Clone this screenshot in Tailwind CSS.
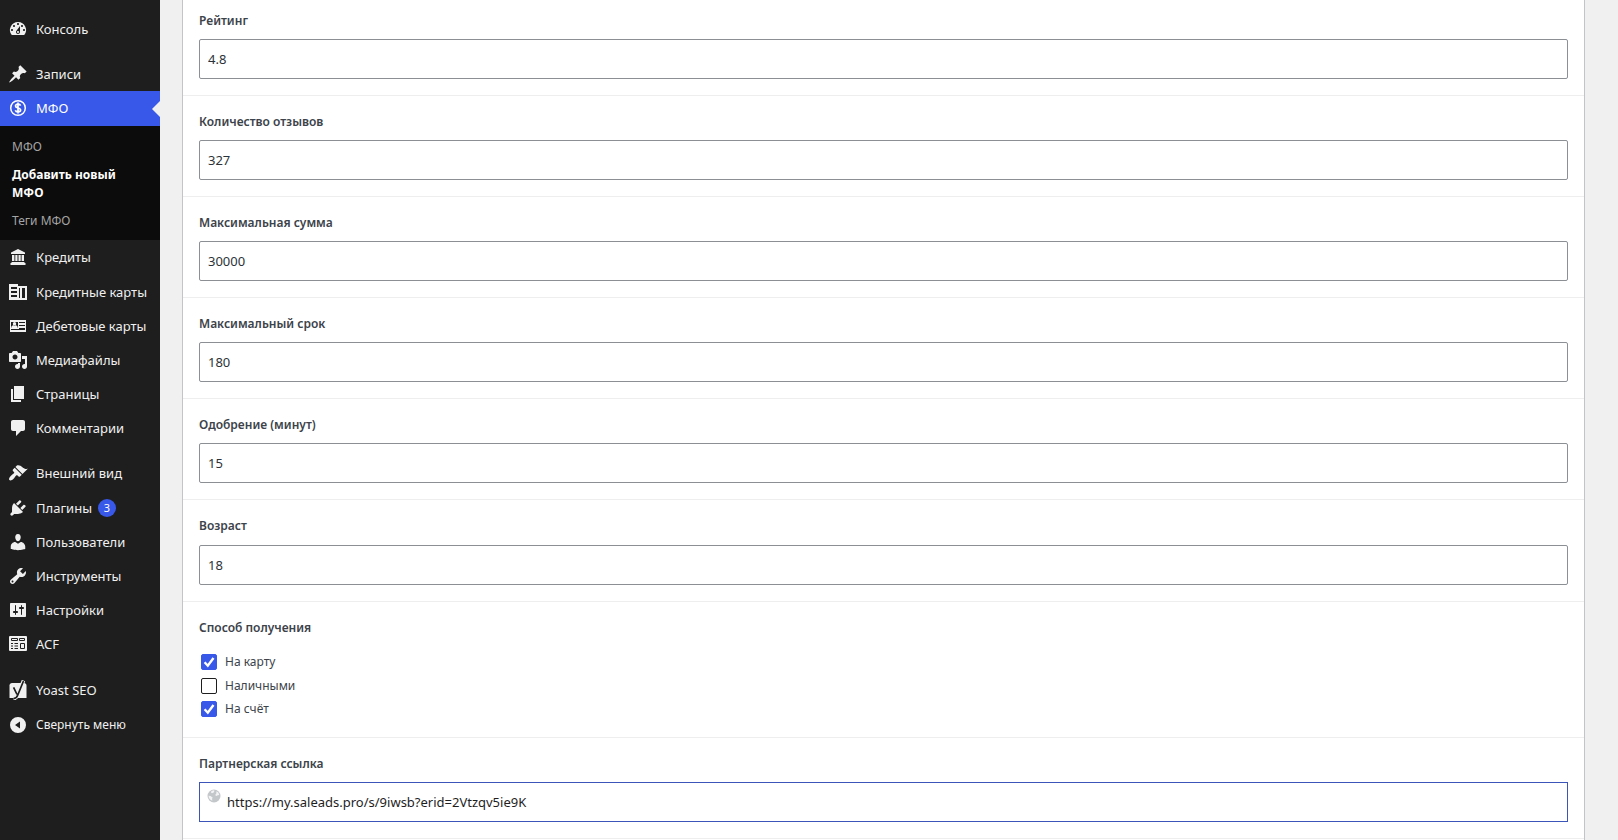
<!DOCTYPE html>
<html lang="ru">
<head>
    <meta charset="UTF-8">
    <meta name="viewport" content="width=device-width, initial-scale=1.0">
    <title>Добавить новый МФО</title>
    <script src="https://cdn.jsdelivr.net/npm/@tailwindcss/browser@4"></script>
</head>
<body class="flex h-screen overflow-hidden bg-[#f0f0f1] font-['Noto_Sans','Open_Sans',sans-serif] text-[12px] text-[#3c434a]">
    <!-- Sidebar -->
    <nav class="w-40 shrink-0 bg-[#1e1e1e] pt-3 text-[13px] leading-[18px] text-[#f0f0f0]">
        <ul>
            <li><a href="#" class="flex h-[34px] items-center gap-2 pl-2">
                <svg class="size-5 shrink-0" viewBox="0 0 20 20" fill="currentColor" fill-rule="evenodd"><path d="M3.76 16h12.48A7.998 7.998 0 0 0 10 3a7.998 7.998 0 0 0-6.24 13zM10 4c.55 0 1 .45 1 1s-.45 1-1 1-1-.45-1-1 .45-1 1-1zM6 6c.55 0 1 .45 1 1s-.45 1-1 1-1-.45-1-1 .45-1 1-1zm8 0c.55 0 1 .45 1 1s-.45 1-1 1-1-.45-1-1 .45-1 1-1zm-5.37 5.55L12 7v6c0 1.1-.9 2-2 2s-2-.9-2-2c0-.57.24-1.08.63-1.45zM4 10c.55 0 1 .45 1 1s-.45 1-1 1-1-.45-1-1 .45-1 1-1zm12 0c.55 0 1 .45 1 1s-.45 1-1 1-1-.45-1-1 .45-1 1-1zm-5 3c0-.55-.45-1-1-1s-1 .45-1 1 .45 1 1 1 1-.45 1-1z"/></svg>
                Консоль</a></li>
            <li class="mt-[11px]"><a href="#" class="flex h-[34px] items-center gap-2 pl-2">
                <svg class="size-5 shrink-0" viewBox="0 0 20 20" fill="currentColor"><path d="M10.44 3.02l1.82-1.82 6.36 6.35-1.83 1.82c-1.05-.68-2.48-.57-3.41.36l-.75.75c-.92.93-1.04 2.35-.35 3.41l-1.83 1.82-2.41-2.41-2.8 2.79c-.42.42-3.38 2.71-3.8 2.29s1.86-3.39 2.28-3.81l2.79-2.79L4.1 9.36l1.83-1.82c1.05.69 2.48.57 3.4-.36l.75-.75c.93-.92 1.05-2.35.36-3.41z"/></svg>
                Записи</a></li>
            <li>
                <a href="#" class="relative flex h-[35px] items-center gap-2 bg-[#3858e9] pb-px pl-2 text-white">
                    <svg class="size-5 shrink-0" viewBox="0 0 20 20" fill="none" stroke="currentColor"><circle cx="10" cy="10" r="7.3" stroke-width="1.5"/><path d="M12.6 7.6C12.2 6.7 11.2 6.2 10 6.2c-1.4 0-2.5.7-2.5 1.8 0 2.6 5.1 1.3 5.1 4 0 1.2-1.1 1.9-2.6 1.9-1.4 0-2.4-.6-2.7-1.6M10 4.6v10.8" stroke-width="1.7"/></svg>
                    МФО
                    <span class="absolute top-1/2 right-0 -translate-y-1/2 border-y-8 border-r-8 border-y-transparent border-r-[#f0f0f1]"></span>
                </a>
                <ul class="bg-[#0c0c0c] px-3 pt-[7px] pb-[5px] text-[12px] text-[#a5a5a5]">
                    <li><a href="#" class="block py-[5px]">МФО</a></li>
                    <li><a href="#" class="block py-[5px] font-bold text-white">Добавить новый МФО</a></li>
                    <li><a href="#" class="block py-[5px]">Теги МФО</a></li>
                </ul>
            </li>
            <li><a href="#" class="flex h-[35px] items-center gap-2 pb-px pl-2">
                <svg class="size-5 shrink-0" viewBox="0 0 20 20" fill="currentColor"><path d="M10 2l7 3.5V7H3V5.5zM4 8h2.4v6H4zM7.3 8h2.2v6H7.3zM10.5 8h2.2v6h-2.2zM13.6 8H16v6h-2.4zM3.5 15h13v1h-13zM2.5 16h15v2h-15z"/></svg>
                Кредиты</a></li>
            <li><a href="#" class="flex h-[34px] items-center gap-2 pl-2">
                <svg class="size-5 shrink-0" viewBox="0 0 20 20" fill="currentColor" fill-rule="evenodd"><path d="M1 2h9v2h9v14H1zM3 5v2h6V5zm0 4v2h6V9zm0 4v2h6v-2zM11 6v10h1V6zM14 6v10h3V6z"/></svg>
                Кредитные карты</a></li>
            <li><a href="#" class="flex h-[34px] items-center gap-2 pl-2">
                <svg class="size-5 shrink-0" viewBox="0 0 20 20" fill="currentColor" fill-rule="evenodd"><path d="M2 4h16v12H2zM3 6v6h7V6zm8 0v1h6V6zm0 3v1h6V9zm0 3v1h6v-1zM3 13v1h14v-1z"/><path d="M6.5 6a1.7 1.7 0 0 1 0 3.4 1.7 1.7 0 0 1 0-3.4zM3.2 12c0-1.6 1.1-2.7 2.3-2.7l1 .8 1-.8c1.2 0 2.3 1.1 2.3 2.7z"/></svg>
                Дебетовые карты</a></li>
            <li><a href="#" class="flex h-[34px] items-center gap-2 pl-2">
                <svg class="size-5 shrink-0" viewBox="0 0 20 20" fill="currentColor" fill-rule="evenodd"><path d="M13 11V4c0-.55-.45-1-1-1h-1.67L9 1H5L3.67 3H2c-.55 0-1 .45-1 1v7c0 .55.45 1 1 1h10c.55 0 1-.45 1-1zM7 4.5c1.38 0 2.5 1.12 2.5 2.5S8.38 9.5 7 9.5 4.5 8.38 4.5 7 5.62 4.5 7 4.5zM14 6h5v10.5c0 1.38-1.12 2.5-2.5 2.5S14 17.88 14 16.5s1.12-2.5 2.5-2.5c.17 0 .34.02.5.05V9h-3V6zm-4 8.05V13h2v3.5c0 1.38-1.12 2.5-2.5 2.5S7 17.88 7 16.5 8.12 14 9.5 14c.17 0 .34.02.5.05z"/></svg>
                Медиафайлы</a></li>
            <li><a href="#" class="flex h-[34px] items-center gap-2 pl-2">
                <svg class="size-5 shrink-0" viewBox="0 0 20 20" fill="currentColor"><path d="M6 15V2h10v13H6zm-1 1h8v2H3V5h2v11z"/></svg>
                Страницы</a></li>
            <li><a href="#" class="flex h-[34px] items-center gap-2 pl-2">
                <svg class="size-5 shrink-0" viewBox="0 0 20 20" fill="currentColor"><path d="M5 2h10c1.1 0 2 .9 2 2v7c0 1.1-.9 2-2 2h-2l-5 5v-5H5c-1.1 0-2-.9-2-2V4c0-1.1.9-2 2-2z"/></svg>
                Комментарии</a></li>
            <li class="mt-[11px]"><a href="#" class="flex h-[35px] items-center gap-2 pb-px pl-2">
                <svg class="size-5 shrink-0" viewBox="0 0 20 20" fill="currentColor"><path d="M14.48 11.06L7.41 3.99l1.5-1.5c.5-.56 2.3-.47 3.51.32 1.21.8 1.43 1.28 2.91 2.1 1.18.64 2.45 1.26 4.45.85zm-.71.71L6.7 4.7 4.93 6.47c-.39.39-.39 1.02 0 1.41l1.06 1.06c.39.39.39 1.03 0 1.42-.6.6-1.43 1.11-2.21 1.69-.35.26-.7.53-1.01.84C1.43 14.23.4 16.08 1.4 17.07c.99 1 2.84-.03 4.18-1.36.31-.31.58-.66.85-1.02.57-.78 1.08-1.61 1.69-2.21.39-.39 1.02-.39 1.41 0l1.06 1.06c.39.39 1.02.39 1.41 0z"/></svg>
                Внешний вид</a></li>
            <li><a href="#" class="flex h-[34px] items-center gap-2 pl-2">
                <svg class="size-5 shrink-0" viewBox="0 0 20 20" fill="currentColor"><path d="M13.11 4.36L9.87 7.6 8 5.73l3.24-3.24c.35-.34 1.05-.2 1.56.32.52.51.66 1.21.31 1.55zm-8 1.77l.91-1.12 9.01 9.01-1.19.84c-.71.71-2.63 1.16-3.82 1.16H6.14L4.9 17.26c-.59.59-1.54.59-2.12 0-.59-.58-.59-1.53 0-2.12l1.24-1.24v-3.88c0-1.13.4-3.19 1.09-3.89zm7.26 3.97l3.24-3.24c.34-.35 1.04-.21 1.55.31.52.51.66 1.21.31 1.55l-3.24 3.25z"/></svg>
                <span class="flex items-center gap-[6px]">Плагины <span class="grid size-[18px] place-items-center rounded-full bg-[#3858e9] text-[11px] text-white">3</span></span></a></li>
            <li><a href="#" class="flex h-[34px] items-center gap-2 pl-2">
                <svg class="size-5 shrink-0" viewBox="0 0 20 20" fill="currentColor"><path d="M10 9.25c-2.27 0-2.73-3.44-2.73-3.44C7 4.02 7.82 2 9.97 2c2.16 0 2.98 2.02 2.71 3.81 0 0-.41 3.44-2.68 3.44zm0 2.57L12.72 10c2.39 0 4.52 2.33 4.52 4.53v2.49s-3.65 1.13-7.24 1.13c-3.65 0-7.24-1.13-7.24-1.13v-2.49c0-2.25 1.94-4.48 4.47-4.48z"/></svg>
                Пользователи</a></li>
            <li><a href="#" class="flex h-[34px] items-center gap-2 pl-2">
                <svg class="size-5 shrink-0" viewBox="0 0 20 20" fill="currentColor" fill-rule="evenodd"><path d="M16.68 9.77c-1.34 1.34-3.3 1.67-4.95.99l-5.41 6.52c-.99.99-2.59.99-3.58 0s-.99-2.59 0-3.57l6.52-5.42c-.68-1.65-.35-3.61.99-4.95 1.28-1.28 3.12-1.62 4.72-1.06l-2.89 2.89 2.82 2.82 2.86-2.87c.53 1.58.18 3.39-1.08 4.65zM3.81 16.21c.4.39 1.04.39 1.43 0 .4-.4.4-1.04 0-1.43-.39-.4-1.03-.4-1.43 0-.39.39-.39 1.03 0 1.43z"/></svg>
                Инструменты</a></li>
            <li><a href="#" class="flex h-[34px] items-center gap-2 pl-2">
                <svg class="size-5 shrink-0" viewBox="0 0 20 20" fill="currentColor" fill-rule="evenodd"><path d="M18 16V4c0-.55-.45-1-1-1H3c-.55 0-1 .45-1 1v12c0 .55.45 1 1 1h14c.55 0 1-.45 1-1zM8 11h1c.55 0 1 .45 1 1s-.45 1-1 1H8v1.5c0 .28-.22.5-.5.5s-.5-.22-.5-.5V13H6c-.55 0-1-.45-1-1s.45-1 1-1h1V5.5c0-.28.22-.5.5-.5s.5.22.5.5V11zm5-2h-1c-.55 0-1-.45-1-1s.45-1 1-1h1V5.5c0-.28.22-.5.5-.5s.5.22.5.5V7h1c.55 0 1 .45 1 1s-.45 1-1 1h-1v5.5c0 .28-.22.5-.5.5s-.5-.22-.5-.5V9z"/></svg>
                Настройки</a></li>
            <li><a href="#" class="flex h-[34px] items-center gap-2 pl-2">
                <svg class="size-5 shrink-0" viewBox="0 0 20 20"><rect x="1" y="2" width="18" height="15" rx="1" fill="currentColor"/><g fill="none" stroke="#1e1e1e"><path d="M3.5 4.5h6v2h-6zM11.5 4.5h5v2h-5zM12.5 9.5h4v5h-4z"/><path d="M3 9.5h2M6.5 9.5H10M3 12h2M6.5 12H10M3 14.5h2M6.5 14.5H10"/></g></svg>
                ACF</a></li>
            <li class="mt-[11px]"><a href="#" class="flex h-[35px] items-center gap-2 pl-2">
                <svg class="size-5 shrink-0" viewBox="0 0 20 20"><path d="M4 3h12c1.4 0 2.5 1.1 2.5 2.5V18h-17V5.5C1.5 4.1 2.6 3 4 3z" fill="currentColor"/><path d="M15.5.5L9.8 15c-.8 2.3-2 3.5-4.3 3.6" fill="none" stroke="currentColor" stroke-width="3.6"/><path d="M5.6 7.3L9 14.5M15.5 1L9.8 15c-.8 2.3-2 3.5-4.3 3.6" fill="none" stroke="#1e1e1e" stroke-width="1.7"/></svg>
                Yoast SEO</a></li>
            <li><button type="button" class="flex h-[35px] w-full items-center gap-2 pl-2 text-[12px]">
                <svg class="size-5 shrink-0" viewBox="0 0 20 20" fill="currentColor" fill-rule="evenodd"><path d="M10 2a8 8 0 1 1 0 16 8 8 0 0 1 0-16zM12 6.5L7 10l5 3.5z"/></svg>
                Свернуть меню</button></li>
        </ul>
    </nav>

    <!-- Fields -->
    <main class="min-w-0 flex-1 pr-[33px] pl-[22px]">
        <form class="min-h-full divide-y divide-[#eeeeee] border-x border-[#c3c4c7] bg-white">
            <div class="px-4 pt-[11px] pb-4">
                <label for="rating" class="mb-2 block leading-5 font-semibold">Рейтинг</label>
                <input type="text" id="rating" value="4.8" class="block h-10 w-full rounded-[2px] border border-[#8c8f94] bg-white px-2 text-[13px] text-[#2c3338]">
            </div>
            <div class="p-4">
                <label for="reviews" class="mb-2 block leading-5 font-semibold">Количество отзывов</label>
                <input type="text" id="reviews" value="327" class="block h-10 w-full rounded-[2px] border border-[#8c8f94] bg-white px-2 text-[13px] text-[#2c3338]">
            </div>
            <div class="p-4">
                <label for="max-sum" class="mb-2 block leading-5 font-semibold">Максимальная сумма</label>
                <input type="text" id="max-sum" value="30000" class="block h-10 w-full rounded-[2px] border border-[#8c8f94] bg-white px-2 text-[13px] text-[#2c3338]">
            </div>
            <div class="p-4">
                <label for="max-term" class="mb-2 block leading-5 font-semibold">Максимальный срок</label>
                <input type="text" id="max-term" value="180" class="block h-10 w-full rounded-[2px] border border-[#8c8f94] bg-white px-2 text-[13px] text-[#2c3338]">
            </div>
            <div class="p-4">
                <label for="approval" class="mb-2 block leading-5 font-semibold">Одобрение (минут)</label>
                <input type="text" id="approval" value="15" class="block h-10 w-full rounded-[2px] border border-[#8c8f94] bg-white px-2 text-[13px] text-[#2c3338]">
            </div>
            <div class="p-4">
                <label for="age" class="mb-[9px] block leading-5 font-semibold">Возраст</label>
                <input type="text" id="age" value="18" class="block h-10 w-full rounded-[2px] border border-[#8c8f94] bg-white px-2 text-[13px] text-[#2c3338]">
            </div>
            <fieldset class="p-4">
                <legend class="float-left mb-3 w-full leading-5 font-semibold">Способ получения</legend>
                <div class="clear-both pl-[2px]">
                    <label class="flex h-6 items-center gap-2">
                        <span class="grid size-4">
                            <input type="checkbox" checked class="peer col-start-1 row-start-1 size-4 appearance-none rounded-[2px] border border-[#1e1e1e] checked:border-[#3858e9] checked:bg-[#3858e9]">
                            <svg class="pointer-events-none invisible col-start-1 row-start-1 size-4 peer-checked:visible" viewBox="0 0 16 16" fill="none" stroke="white" stroke-width="2.4"><path d="M3.6 8.3l3.2 3.4L12.5 4"/></svg>
                        </span>
                        На карту
                    </label>
                    <label class="flex h-[23px] items-center gap-2">
                        <span class="grid size-4">
                            <input type="checkbox" class="peer col-start-1 row-start-1 size-4 appearance-none rounded-[2px] border border-[#1e1e1e] checked:border-[#3858e9] checked:bg-[#3858e9]">
                            <svg class="pointer-events-none invisible col-start-1 row-start-1 size-4 peer-checked:visible" viewBox="0 0 16 16" fill="none" stroke="white" stroke-width="2.4"><path d="M3.6 8.3l3.2 3.4L12.5 4"/></svg>
                        </span>
                        Наличными
                    </label>
                    <label class="flex h-6 items-center gap-2">
                        <span class="grid size-4">
                            <input type="checkbox" checked class="peer col-start-1 row-start-1 size-4 appearance-none rounded-[2px] border border-[#1e1e1e] checked:border-[#3858e9] checked:bg-[#3858e9]">
                            <svg class="pointer-events-none invisible col-start-1 row-start-1 size-4 peer-checked:visible" viewBox="0 0 16 16" fill="none" stroke="white" stroke-width="2.4"><path d="M3.6 8.3l3.2 3.4L12.5 4"/></svg>
                        </span>
                        На счёт
                    </label>
                </div>
            </fieldset>
            <div class="border-b border-b-[#eeeeee] p-4">
                <label for="partner-link" class="mb-2 block leading-5 font-semibold">Партнерская ссылка</label>
                <div class="relative">
                    <svg class="absolute top-[7px] left-2 size-[14px]" viewBox="0 0 14 14"><circle cx="7" cy="7" r="6.5" fill="#c4c7ca"/><path d="M4.5 2l2-.8 1 .6-.8 1.6L5 4.3 4 3.5zM9.5 2.2l1.8 1.3 1 2.5-1.6.3-1.2.8L8 6l1.2-1zM1.5 6.8l2 .3 2.2 1.4-.6 1.3.2 2L3.5 10.8 2 9z" fill="#f2f3f4"/></svg>
                    <input type="url" id="partner-link" value="https://my.saleads.pro/s/9iwsb?erid=2Vtzqv5ie9K" class="block h-10 w-full border border-[#3c55b8] bg-white pr-2 pl-[27px] text-[13px] text-[#1e1e1e]">
                </div>
            </div>
        </form>
    </main>
</body>
</html>
